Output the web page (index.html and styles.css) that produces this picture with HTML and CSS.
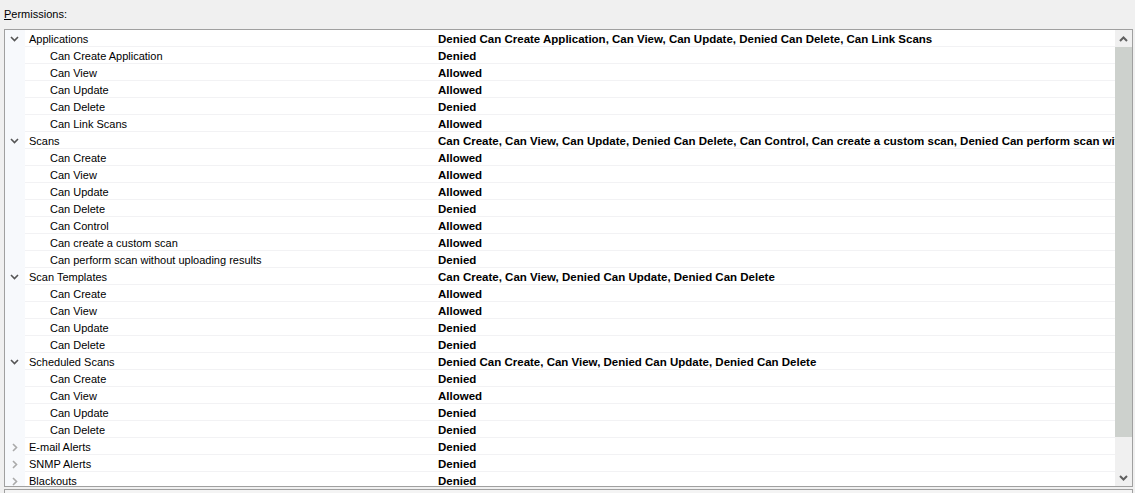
FILE: index.html
```html
<!DOCTYPE html>
<html>
<head>
<meta charset="utf-8">
<link rel="stylesheet" href="styles.css">
</head>
<body>
<div class="label"><u>P</u>ermissions:</div>
<div class="box">
  <div class="tree">
    <div class="row cat"><span class="gut"><svg class="chev" width="9" height="6" viewBox="0 0 9 6"><path d="M1 1 L4.5 4.5 L8 1" fill="none" stroke="#555" stroke-width="1.6"/></svg></span><span class="name">Applications</span><span class="val">Denied Can Create Application, Can View, Can Update, Denied Can Delete, Can Link Scans</span></div>
    <div class="row child"><span class="gut"></span><span class="name">Can Create Application</span><span class="val">Denied</span></div>
    <div class="row child"><span class="gut"></span><span class="name">Can View</span><span class="val">Allowed</span></div>
    <div class="row child"><span class="gut"></span><span class="name">Can Update</span><span class="val">Allowed</span></div>
    <div class="row child"><span class="gut"></span><span class="name">Can Delete</span><span class="val">Denied</span></div>
    <div class="row child"><span class="gut"></span><span class="name">Can Link Scans</span><span class="val">Allowed</span></div>
    <div class="row cat"><span class="gut"><svg class="chev" width="9" height="6" viewBox="0 0 9 6"><path d="M1 1 L4.5 4.5 L8 1" fill="none" stroke="#555" stroke-width="1.6"/></svg></span><span class="name">Scans</span><span class="val">Can Create, Can View, Can Update, Denied Can Delete, Can Control, Can create a custom scan, Denied Can perform scan without uploading results</span></div>
    <div class="row child"><span class="gut"></span><span class="name">Can Create</span><span class="val">Allowed</span></div>
    <div class="row child"><span class="gut"></span><span class="name">Can View</span><span class="val">Allowed</span></div>
    <div class="row child"><span class="gut"></span><span class="name">Can Update</span><span class="val">Allowed</span></div>
    <div class="row child"><span class="gut"></span><span class="name">Can Delete</span><span class="val">Denied</span></div>
    <div class="row child"><span class="gut"></span><span class="name">Can Control</span><span class="val">Allowed</span></div>
    <div class="row child"><span class="gut"></span><span class="name">Can create a custom scan</span><span class="val">Allowed</span></div>
    <div class="row child"><span class="gut"></span><span class="name">Can perform scan without uploading results</span><span class="val">Denied</span></div>
    <div class="row cat"><span class="gut"><svg class="chev" width="9" height="6" viewBox="0 0 9 6"><path d="M1 1 L4.5 4.5 L8 1" fill="none" stroke="#555" stroke-width="1.6"/></svg></span><span class="name">Scan Templates</span><span class="val">Can Create, Can View, Denied Can Update, Denied Can Delete</span></div>
    <div class="row child"><span class="gut"></span><span class="name">Can Create</span><span class="val">Allowed</span></div>
    <div class="row child"><span class="gut"></span><span class="name">Can View</span><span class="val">Allowed</span></div>
    <div class="row child"><span class="gut"></span><span class="name">Can Update</span><span class="val">Denied</span></div>
    <div class="row child"><span class="gut"></span><span class="name">Can Delete</span><span class="val">Denied</span></div>
    <div class="row cat"><span class="gut"><svg class="chev" width="9" height="6" viewBox="0 0 9 6"><path d="M1 1 L4.5 4.5 L8 1" fill="none" stroke="#555" stroke-width="1.6"/></svg></span><span class="name">Scheduled Scans</span><span class="val">Denied Can Create, Can View, Denied Can Update, Denied Can Delete</span></div>
    <div class="row child"><span class="gut"></span><span class="name">Can Create</span><span class="val">Denied</span></div>
    <div class="row child"><span class="gut"></span><span class="name">Can View</span><span class="val">Allowed</span></div>
    <div class="row child"><span class="gut"></span><span class="name">Can Update</span><span class="val">Denied</span></div>
    <div class="row child"><span class="gut"></span><span class="name">Can Delete</span><span class="val">Denied</span></div>
    <div class="row cat"><span class="gut"><svg class="chevr" width="6" height="9" viewBox="0 0 6 9"><path d="M1 1 L4.5 4.5 L1 8" fill="none" stroke="#aaa" stroke-width="1.6"/></svg></span><span class="name">E-mail Alerts</span><span class="val">Denied</span></div>
    <div class="row cat"><span class="gut"><svg class="chevr" width="6" height="9" viewBox="0 0 6 9"><path d="M1 1 L4.5 4.5 L1 8" fill="none" stroke="#aaa" stroke-width="1.6"/></svg></span><span class="name">SNMP Alerts</span><span class="val">Denied</span></div>
    <div class="row cat"><span class="gut"><svg class="chevr" width="6" height="9" viewBox="0 0 6 9"><path d="M1 1 L4.5 4.5 L1 8" fill="none" stroke="#aaa" stroke-width="1.6"/></svg></span><span class="name">Blackouts</span><span class="val">Denied</span></div>
  </div>
  <div class="scrollbar">
    <div class="arrow"><svg width="9" height="6" viewBox="0 0 9 6"><path d="M1 5 L4.5 1.5 L8 5" fill="none" stroke="#606060" stroke-width="2"/></svg></div>
    <div class="track"><div class="thumb"></div></div>
    <div class="arrow"><svg width="9" height="6" viewBox="0 0 9 6"><path d="M1 1 L4.5 4.5 L8 1" fill="none" stroke="#606060" stroke-width="2"/></svg></div>
  </div>
</div>
<div class="box2"></div>
</body>
</html>
```
FILE: styles.css
```css
html, body {
  margin: 0;
  padding: 0;
  background: #f0f0f0;
  font-family: "Liberation Sans", Arial, sans-serif;
  font-size: 11px;
  color: #000;
  overflow: hidden;
  height: 493px;
}
.label {
  padding: 7px 0 0 4px;
  height: 29px;
  box-sizing: border-box;
  line-height: 14px;
}
.label u {
  text-decoration: underline;
  text-underline-offset: 1px;
}
.box {
  margin-left: 4px;
  width: 1129px;
  height: 458px;
  box-sizing: border-box;
  border: 1px solid #a0a0a0;
  background: #fff;
  display: flex;
}
.tree {
  flex: 1;
  overflow: hidden;
  min-width: 0;
}
.row {
  display: flex;
  height: 17px;
  align-items: stretch;
  white-space: nowrap;
}
.gut {
  width: 20px;
  flex: none;
  background: #f7f9fc;
  display: flex;
  align-items: center;
  justify-content: center;
  padding-top: 1px;
  box-sizing: border-box;
}
.chev { margin-left: -1px; }
.name {
  width: 408px;
  flex: none;
  box-sizing: border-box;
  height: 17px;
  padding-left: 4px;
  padding-top: 1px;
  line-height: 16px;
  border-bottom: 1px solid #f2f2f4;
}
.child .name {
  padding-left: 25px;
}
.val {
  flex: 1;
  box-sizing: border-box;
  height: 17px;
  padding-left: 5px;
  padding-top: 1px;
  font-weight: bold;
  font-size: 11.5px;
  line-height: 16px;
  border-bottom: 1px solid #f2f2f4;
  overflow: hidden;
}
.scrollbar {
  width: 17px;
  flex: none;
  background: #f0f0f0;
  display: flex;
  flex-direction: column;
}
.arrow {
  height: 17px;
  display: flex;
  align-items: center;
  justify-content: center;
}
.track {
  flex: 1;
}
.thumb {
  height: 390px;
  background: #cdd1cd;
}
.box2 {
  margin: 2px 0 0 4px;
  width: 1129px;
  height: 10px;
  border: 1px solid #a0a0a0;
  border-bottom: none;
  box-sizing: border-box;
  background: #f4f4f4;
}
```
